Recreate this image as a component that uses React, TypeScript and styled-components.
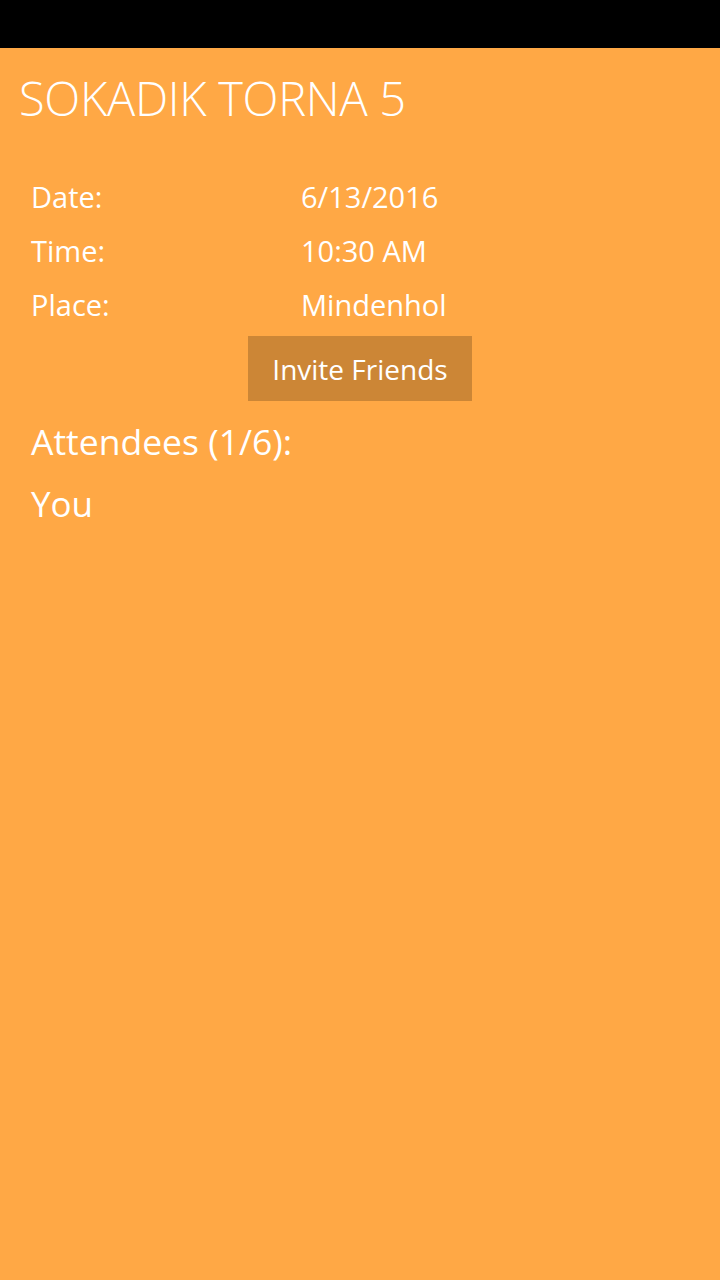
import styled, { createGlobalStyle } from "styled-components";

const GlobalStyle = createGlobalStyle`
    html, body {
        margin: 0;
        padding: 0;
        background: #ffa845;
    }
    body {
        font-family: "Open Sans", "Noto Sans", sans-serif;
        color: #ffffff;
    }
`;

const details = [
    { label: "Date:", value: "6/13/2016" },
    { label: "Time:", value: "10:30 AM" },
    { label: "Place:", value: "Mindenhol" },
];

const attendees = ["You"];

const App = () => {
    return (
        <>
            <GlobalStyle />
            <Page>
                <StatusBar />
                <Content>
                    <Title>SOKADIK TORNA 5</Title>
                    <Details>
                        {details.map(({ label, value }) => (
                            <Row key={label}>
                                <Label>{label}</Label>
                                <Value>{value}</Value>
                            </Row>
                        ))}
                    </Details>
                    <ButtonRow>
                        <InviteButton type="button">Invite Friends</InviteButton>
                    </ButtonRow>
                    <Attendees>
                        <Heading>Attendees (1/6):</Heading>
                        {attendees.map((name) => (
                            <Attendee key={name}>{name}</Attendee>
                        ))}
                    </Attendees>
                </Content>
            </Page>
        </>
    );
};

const Page = styled.div`
    display: flex;
    flex-direction: column;

    width: 720px;
    min-height: 1280px;

    background: #ffa845;
`;

const StatusBar = styled.div`
    height: 48px;

    background: #000000;
`;

const Content = styled.div`
    display: flex;
    flex-direction: column;

    padding: 0 19px;
`;

const Title = styled.h1`
    margin: 17px 0 0;

    font-size: 47px;
    font-weight: 300;
    line-height: 66px;
    letter-spacing: -0.3px;
`;

const Details = styled.div`
    display: flex;
    flex-direction: column;

    margin-top: 39px;
    padding-left: 12px;
`;

const Row = styled.div`
    display: grid;
    grid-template-columns: 270px 1fr;

    height: 54px;

    font-size: 29px;
    line-height: 54px;
`;

const Label = styled.span``;

const Value = styled.span``;

const ButtonRow = styled.div`
    display: flex;
    justify-content: center;

    margin-top: 4px;
`;

const InviteButton = styled.button`
    width: 224px;
    height: 65px;

    padding: 0;

    font-family: inherit;
    font-size: 28px;
    color: #ffffff;

    background: #cc8636;
    border: none;
`;

const Attendees = styled.div`
    display: flex;
    flex-direction: column;

    padding-left: 12px;
`;

const Heading = styled.div`
    margin-top: 13px;

    font-size: 35.5px;
    line-height: 54px;
`;

const Attendee = styled.div`
    margin-top: 9px;

    font-size: 35px;
    line-height: 54px;
`;

export default App;
